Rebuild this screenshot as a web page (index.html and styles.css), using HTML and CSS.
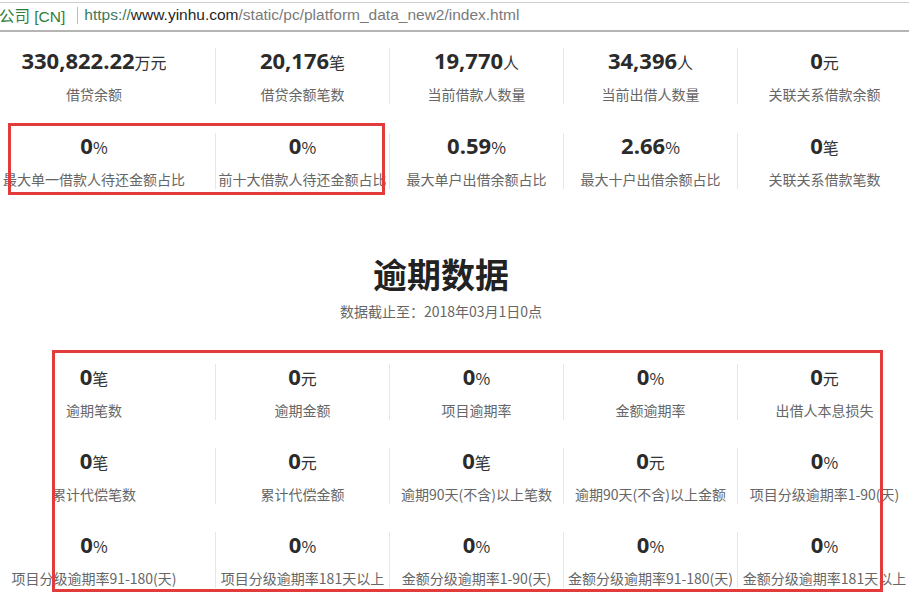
FILE: index.html
```html
<!DOCTYPE html>
<html lang="zh-CN">
<head>
<meta charset="utf-8">
<title>平台数据</title>
<link rel="stylesheet" href="styles.css">
</head>
<body>
<div class="addr">
  <span class="org">公司 [CN]</span>
  <span class="sep"></span>
  <span class="url"><span class="scheme">https://</span><span class="host">www.yinhu.com</span><span class="path">/static/pc/platform_data_new2/index.html</span></span>
</div>

<section class="stats top">
  <div class="row">
    <div class="item"><div class="value">330,822.22<span class="unit">万元</span></div><div class="label">借贷余额</div></div>
    <div class="item"><div class="value">20,176<span class="unit">笔</span></div><div class="label">借贷余额笔数</div></div>
    <div class="item"><div class="value">19,770<span class="unit">人</span></div><div class="label">当前借款人数量</div></div>
    <div class="item"><div class="value">34,396<span class="unit">人</span></div><div class="label">当前出借人数量</div></div>
    <div class="item"><div class="value">0<span class="unit">元</span></div><div class="label">关联关系借款余额</div></div>
  </div>
  <div class="row">
    <div class="item"><div class="value">0<span class="unit">%</span></div><div class="label">最大单一借款人待还金额占比</div></div>
    <div class="item"><div class="value">0<span class="unit">%</span></div><div class="label">前十大借款人待还金额占比</div></div>
    <div class="item"><div class="value">0.59<span class="unit">%</span></div><div class="label">最大单户出借余额占比</div></div>
    <div class="item"><div class="value">2.66<span class="unit">%</span></div><div class="label">最大十户出借余额占比</div></div>
    <div class="item"><div class="value">0<span class="unit">笔</span></div><div class="label">关联关系借款笔数</div></div>
  </div>
</section>

<h2 class="title">逾期数据</h2>
<p class="sub">数据截止至：2018年03月1日0点</p>

<section class="stats overdue">
  <div class="row">
    <div class="item"><div class="value">0<span class="unit">笔</span></div><div class="label">逾期笔数</div></div>
    <div class="item"><div class="value">0<span class="unit">元</span></div><div class="label">逾期金额</div></div>
    <div class="item"><div class="value">0<span class="unit">%</span></div><div class="label">项目逾期率</div></div>
    <div class="item"><div class="value">0<span class="unit">%</span></div><div class="label">金额逾期率</div></div>
    <div class="item"><div class="value">0<span class="unit">元</span></div><div class="label">出借人本息损失</div></div>
  </div>
  <div class="row">
    <div class="item"><div class="value">0<span class="unit">笔</span></div><div class="label">累计代偿笔数</div></div>
    <div class="item"><div class="value">0<span class="unit">元</span></div><div class="label">累计代偿金额</div></div>
    <div class="item"><div class="value">0<span class="unit">笔</span></div><div class="label">逾期90天(不含)以上笔数</div></div>
    <div class="item"><div class="value">0<span class="unit">元</span></div><div class="label">逾期90天(不含)以上金额</div></div>
    <div class="item"><div class="value">0<span class="unit">%</span></div><div class="label">项目分级逾期率1-90(天)</div></div>
  </div>
  <div class="row">
    <div class="item"><div class="value">0<span class="unit">%</span></div><div class="label">项目分级逾期率91-180(天)</div></div>
    <div class="item"><div class="value">0<span class="unit">%</span></div><div class="label">项目分级逾期率181天以上</div></div>
    <div class="item"><div class="value">0<span class="unit">%</span></div><div class="label">金额分级逾期率1-90(天)</div></div>
    <div class="item"><div class="value">0<span class="unit">%</span></div><div class="label">金额分级逾期率91-180(天)</div></div>
    <div class="item"><div class="value">0<span class="unit">%</span></div><div class="label">金额分级逾期率181天以上</div></div>
  </div>
</section>

<div class="mark mark-top"></div>
<div class="mark mark-overdue"></div>
</body>
</html>
```

FILE: styles.css
```css
html, body {
  margin: 0;
  padding: 0;
  background: #fff;
  overflow: hidden;
}
body {
  font-family: "Noto Sans CJK SC", "Liberation Sans", sans-serif;
  color: #333;
  width: 909px;
  height: 597px;
}

/* address bar */
.addr {
  box-sizing: border-box;
  margin-top: 2px;
  height: 30px;
  padding-bottom: 3px;
  border-top: 1px solid #cfcfcf;
  border-bottom: 2px solid #b4b4b4;
  display: flex;
  align-items: center;
  font-family: "Liberation Sans", "Noto Sans CJK SC", sans-serif;
  font-size: 15.5px;
  white-space: nowrap;
}
.org {
  color: #2f7d3a;
  margin-left: -1px;
}
.sep {
  width: 1px;
  height: 17px;
  background: #bdbdbd;
  margin: 0 6px 0 12px;
}
.scheme { color: #3d7a5c; }
.host { color: #1f1f1f; }
.path { color: #7a7a7a; }

/* stats grid */
.stats.top { margin-top: 16px; }
.row {
  display: flex;
  padding-left: 7px;
  height: 56px;
  margin-bottom: 29px;
}
.stats .row:last-child { margin-bottom: 0; }
.overdue .row { margin-bottom: 28px; }
.item {
  box-sizing: border-box;
  flex: none;
  width: 174px;
  border-left: 1px solid #e6e6e6;
  text-align: center;
  white-space: nowrap;
}
.item:first-child {
  border-left: none;
  margin-right: 34px;
}
.value {
  height: 30px;
  line-height: 24px;
  font-family: "Open Sans", "Noto Sans CJK SC", sans-serif;
  font-weight: 700;
  font-size: 22px;
  color: #2b2b2b;
}
.unit {
  font-family: "Noto Sans CJK SC", "Liberation Sans", sans-serif;
  font-weight: 400;
  font-size: 16px;
  color: #333;
}
.label {
  display: flex;
  justify-content: center;
  margin-top: 6px;
  line-height: 20px;
  font-size: 14px;
  color: #666;
}

/* section title */
.title {
  margin: 63px 0 0;
  text-align: center;
  font-size: 34px;
  line-height: 44px;
  font-weight: 700;
  color: #222;
  padding-right: 27px;
}
.sub {
  margin: 5px 0 0;
  text-align: center;
  font-size: 14px;
  line-height: 20px;
  color: #666;
  padding-right: 27px;
}
.stats.overdue { margin-top: 43px; }

/* red annotation boxes */
.mark {
  position: absolute;
  box-sizing: border-box;
  border: 3px solid #e23b3b;
}
.mark-top {
  left: 8px;
  top: 123px;
  width: 377px;
  height: 72px;
}
.mark-overdue {
  left: 52px;
  top: 350px;
  width: 831px;
  height: 242px;
}
```
